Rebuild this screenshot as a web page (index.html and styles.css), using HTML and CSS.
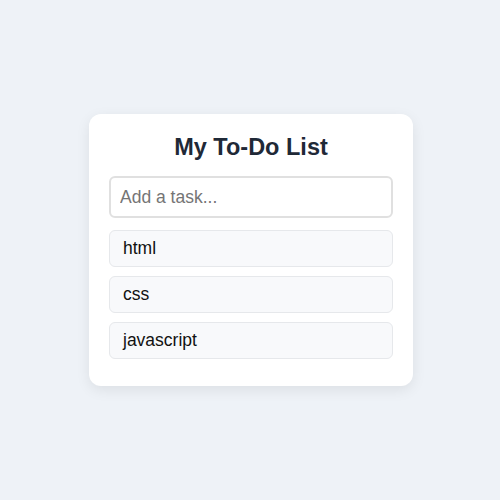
FILE: index.html
```html
<!DOCTYPE html>
<html>
<head>
<meta charset="utf-8">
<link rel="stylesheet" href="styles.css">
</head>
<body>
<div class="page">
  <div class="card">
    <h2 class="title">My To-Do List</h2>
    <input class="task-input" type="text" placeholder="Add a task...">
    <ul class="list">
      <li class="item">html</li>
      <li class="item">css</li>
      <li class="item">javascript</li>
    </ul>
  </div>
</div>
</body>
</html>
```
FILE: styles.css
```css
html, body {
  margin: 0;
  padding: 0;
}
body {
  background: #eef2f7;
  font-family: "Liberation Sans", Arial, sans-serif;
}
.page {
  box-sizing: border-box;
  width: 500px;
  height: 500px;
  padding: 0 0 0 2px;
  display: flex;
  align-items: center;
  justify-content: center;
}
.card {
  width: 284px;
  background: #ffffff;
  border-radius: 12px;
  padding: 20px 20px 20px;
  box-shadow: 0 4px 14px rgba(0, 0, 0, 0.08);
  display: flex;
  flex-direction: column;
}
.title {
  margin: 0 0 16px;
  font-size: 23.5px;
  line-height: 26px;
  font-weight: 700;
  text-align: center;
  color: #1f2937;
}
.task-input {
  box-sizing: border-box;
  width: 100%;
  height: 42px;
  padding: 0 9px;
  border: 2px solid #e0e0e0;
  border-radius: 6px;
  font-family: "Liberation Sans", Arial, sans-serif;
  font-size: 17.5px;
  color: #333;
  outline: none;
  margin: 0 0 12px;
}
.task-input::placeholder {
  color: #757575;
}
.list {
  list-style: none;
  margin: 0;
  padding: 0;
  display: flex;
  flex-direction: column;
  gap: 9px;
}
.item {
  box-sizing: border-box;
  height: 37px;
  display: flex;
  align-items: center;
  padding: 0 13px;
  background: #f8f9fb;
  border: 1px solid #e6e8eb;
  border-radius: 6px;
  font-size: 17.5px;
  color: #111;
}
.list .item:last-child {
  margin-bottom: 7px;
}
```
